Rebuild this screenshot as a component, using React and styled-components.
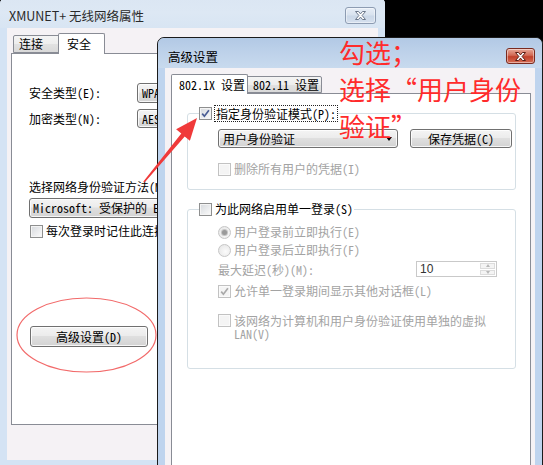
import React from 'react';
import styled, { createGlobalStyle } from 'styled-components';

const UI = `"Noto Sans Mono CJK SC", "Noto Sans CJK SC", "Liberation Sans", sans-serif`;
const TITLE = `"Noto Sans CJK SC", "Liberation Sans", sans-serif`;

const Global = createGlobalStyle`
  html, body { margin: 0; padding: 0; background: #000; }
  body { width: 543px; height: 465px; overflow: hidden; font-family: ${UI}; font-size: 12px; color: #000; }
`;

const Desktop = styled.div`
  position: relative;
  width: 543px;
  height: 465px;
  overflow: hidden;
  background: #000;
`;

const Window = styled.div`
  position: absolute;
  z-index: ${(p) => p.$z};
  left: ${(p) => p.$x}px;
  top: ${(p) => p.$y}px;
  width: ${(p) => p.$w}px;
  height: ${(p) => p.$h}px;
  box-sizing: border-box;
  display: flex;
  flex-direction: column;
  padding: 0 7px 7px;
  border: ${(p) => (p.$active ? '1px solid #1b1b1b' : '0')};
  border-radius: 7px 7px 0 0;
  background: ${(p) => (p.$active ? '#bfd4ee' : '#d4e3f4')};
`;

const TitleBar = styled.div`
  flex: none;
  height: ${(p) => p.$h}px;
  margin: 0 -7px;
  padding: 8px ${(p) => p.$pr}px 0 ${(p) => p.$pl}px;
  box-sizing: border-box;
  display: flex;
  align-items: flex-start;
  justify-content: space-between;
  border-radius: 7px 7px 0 0;
  background: ${(p) =>
    p.$active
      ? 'linear-gradient(#b2c9e5, #bed2ea 50%, #c8daee)'
      : 'linear-gradient(#dbe6f3, #dde8f4 50%, #d8e5f3)'};
`;

const TitleText = styled.div`
  font-family: ${TITLE};
  font-size: 12.5px;
  line-height: 22px;
  color: ${(p) => (p.$active ? '#000' : '#2a2a2a')};
  white-space: nowrap;
`;

const CloseBtn = styled.div`
  margin-top: 2px;
  width: ${(p) => p.$w}px;
  height: ${(p) => p.$h}px;
  box-sizing: border-box;
  border-radius: 3px;
  border: 1px solid ${(p) => (p.$active ? '#7a2b20' : '#8d9cb2')};
  background: ${(p) =>
    p.$active
      ? 'linear-gradient(#e8a898, #d26a55 45%, #c0402a 55%, #d66d55)'
      : 'linear-gradient(#e7eef7, #d9e3ef 45%, #cbd8e8 55%, #d5e0ee)'};
  box-shadow: inset 0 0 0 1px rgba(255, 255, 255, 0.45);
  display: flex;
  align-items: center;
  justify-content: center;
`;

const Client = styled.div`
  flex: 1;
  min-height: 0;
  display: flex;
  flex-direction: column;
  background: #f5f2f5;
  padding: ${(p) => p.$pad};
`;

const TabStrip = styled.div`
  flex: none;
  height: ${(p) => p.$h}px;
  display: flex;
  align-items: flex-end;
  padding-left: 2px;
  margin-bottom: -1px;
  position: relative;
  z-index: 2;
`;

const Tab = styled.div`
  box-sizing: border-box;
  width: ${(p) => p.$w}px;
  height: ${(p) => (p.$selected ? '100%' : `calc(100% - 3px)`)};
  margin: ${(p) => (p.$selected ? '0 -2px' : '0 0 1px 0')};
  padding-left: ${(p) => (p.$selected ? p.$pl + 2 : p.$pl)}px;
  border: 1px solid #898c95;
  border-bottom: ${(p) => (p.$selected ? '0' : '1px solid #898c95')};
  border-radius: 2px 2px 0 0;
  background: ${(p) => (p.$selected ? '#fff' : 'linear-gradient(#f4f4f4, #ededed 50%, #e2e2e2 50%, #d9d9d9)')};
  position: relative;
  z-index: ${(p) => (p.$selected ? 2 : 1)};
  display: flex;
  align-items: center;
  line-height: 14px;
  white-space: nowrap;
`;

const Panel = styled.div`
  box-sizing: border-box;
  flex: ${(p) => (p.$h ? 'none' : '1')};
  height: ${(p) => (p.$h ? `${p.$h}px` : 'auto')};
  border: 1px solid #898c95;
  background: #fff;
  position: relative;
  z-index: 1;
  display: flex;
  flex-direction: column;
  align-items: flex-start;
  padding: ${(p) => p.$pad};
`;

const FieldRow = styled.div`
  display: flex;
  align-items: center;
  height: ${(p) => p.$h}px;
  margin-top: ${(p) => p.$mt || 0}px;
`;

const Label = styled.div`
  flex: none;
  width: ${(p) => (p.$w ? `${p.$w}px` : 'auto')};
  line-height: 14px;
  margin-top: ${(p) => p.$mt || 0}px;
  color: ${(p) => (p.$disabled ? '#a3a3a3' : '#000')};
  white-space: nowrap;
`;

const Combo = styled.div`
  flex: none;
  box-sizing: border-box;
  width: ${(p) => p.$w}px;
  height: ${(p) => p.$h}px;
  margin-top: ${(p) => p.$mt || 0}px;
  border: 1px solid #707070;
  border-radius: 3px;
  background: linear-gradient(#f4f4f4, #ececec 45%, #dfdfdf 50%, #d3d3d3);
  box-shadow: inset 0 0 0 1px rgba(255, 255, 255, 0.8);
  display: flex;
  align-items: center;
  padding: 0 5px 0 ${(p) => p.$pl || 4}px;
  line-height: 14px;
  white-space: nowrap;
  overflow: hidden;
`;

const DropArrow = styled.span`
  flex: none;
  margin-left: auto;
  width: 0;
  height: 0;
  border-left: 3.5px solid transparent;
  border-right: 3.5px solid transparent;
  border-top: 4px solid #000;
`;

const Button = styled.div`
  flex: none;
  box-sizing: border-box;
  width: ${(p) => p.$w}px;
  height: ${(p) => p.$h}px;
  margin-top: ${(p) => p.$mt || 0}px;
  margin-left: ${(p) => p.$ml || 0}px;
  border: 1px solid #707070;
  border-radius: 3px;
  background: linear-gradient(#f4f4f4, #ececec 45%, #dfdfdf 50%, #d3d3d3);
  box-shadow: inset 0 0 0 1px rgba(255, 255, 255, 0.8);
  display: flex;
  align-items: center;
  justify-content: center;
  line-height: 14px;
  white-space: nowrap;
`;

const CheckRow = styled.div`
  display: flex;
  align-items: ${(p) => (p.$top ? 'flex-start' : 'center')};
  gap: 3px;
  margin-top: ${(p) => p.$mt || 0}px;
  margin-left: ${(p) => p.$ml || 0}px;
  line-height: ${(p) => p.$lh || 14}px;
  color: ${(p) => (p.$disabled ? '#a3a3a3' : '#000')};
  white-space: nowrap;
`;

const BoxEl = styled.span`
  flex: none;
  box-sizing: border-box;
  width: 13px;
  height: 13px;
  border: 1px solid ${(p) => (p.$disabled ? '#c2c2c2' : '#8e8f8f')};
  background: ${(p) => (p.$disabled ? '#f4f4f4' : 'linear-gradient(135deg, #d6d9dd, #fbfbfb)')};
  box-shadow: inset 0 0 0 1px ${(p) => (p.$disabled ? '#fafafa' : '#f4f4f4')};
  display: inline-flex;
  align-items: center;
  justify-content: center;
`;

const RadioEl = styled.span`
  flex: none;
  box-sizing: border-box;
  width: 13px;
  height: 13px;
  border-radius: 50%;
  border: 1px solid ${(p) => (p.$disabled ? '#c6c6c6' : '#8e8f8f')};
  background: radial-gradient(circle at 60% 60%, #fbfbfb, #e3e3e3);
  display: inline-flex;
  align-items: center;
  justify-content: center;
`;

const RadioDot = styled.span`
  width: 5px;
  height: 5px;
  border-radius: 50%;
  background: #9a9a9a;
  box-shadow: 0 0 0 1px #c4c4c4;
`;

const Focus = styled.span`
  outline: 1px dotted #222;
  padding: 0 1px;
  line-height: 15px;
`;

const Group = styled.fieldset`
  box-sizing: border-box;
  width: 329px;
  margin: ${(p) => p.$mt}px 0 0 15px;
  padding: 0;
  border: 1px solid #d5dfe5;
  border-radius: 3px;
  min-inline-size: 0;
`;

const Legend = styled.legend`
  margin-left: 11px;
  padding: 0 1px 0 0;
`;

const GroupBody = styled.div`
  display: flex;
  flex-direction: column;
  align-items: flex-start;
  padding: ${(p) => p.$pad};
`;

const Lines = styled.span`
  display: flex;
  flex-direction: column;
`;

const SpinRow = styled.div`
  align-self: stretch;
  display: flex;
  align-items: center;
  justify-content: space-between;
  margin: 4px 14px 0 0;
  height: 16px;
  color: #a3a3a3;
`;

const Spin = styled.div`
  box-sizing: border-box;
  width: 81px;
  height: 16px;
  border: 1px solid #c9c9c9;
  background: #fff;
  display: flex;
  align-items: stretch;
  padding-left: 3px;
  color: #333;
  font-family: "Liberation Sans", sans-serif;
  font-size: 12px;
`;

const SpinValue = styled.span`
  display: flex;
  align-items: center;
`;

const SpinBtns = styled.div`
  margin-left: auto;
  width: 15px;
  display: flex;
  flex-direction: column;
  padding: 1px;
  gap: 1px;
`;

const SpinHalf = styled.div`
  flex: 1;
  border: 1px solid #dcdcdc;
  background: #f4f4f4;
  display: flex;
  align-items: center;
  justify-content: center;
`;

const Tri = styled.span`
  width: 0;
  height: 0;
  border-left: 2.5px solid transparent;
  border-right: 2.5px solid transparent;
  ${(p) => (p.$up ? 'border-bottom: 3px solid #b8b8b8;' : 'border-top: 3px solid #b8b8b8;')}
`;

const Overlay = styled.svg`
  position: absolute;
  left: 0;
  top: 0;
  pointer-events: none;
  z-index: 10;
`;

const Annotation = styled.div`
  position: absolute;
  left: 339px;
  top: 33px;
  z-index: 11;
  font-family: "Noto Sans CJK SC", sans-serif;
  font-size: 26px;
  line-height: 37px;
  color: #ff2b2b;
  white-space: nowrap;
  pointer-events: none;
`;

function XIcon({ active }) {
  return (
    <svg width="13" height="11" viewBox="0 0 13 11">
      <path
        d="M1.5 1.5h3l2 2.4 2-2.4h3l-3.4 4 3.4 4h-3l-2-2.4-2 2.4h-3l3.4-4z"
        fill="#fff"
        stroke={active ? '#5a1d14' : '#6b778a'}
        strokeWidth="1"
        strokeLinejoin="round"
      />
    </svg>
  );
}

function Check({ checked, disabled }) {
  return (
    <BoxEl $disabled={disabled}>
      {checked && (
        <svg width="9" height="9" viewBox="0 0 9 9">
          <path d="M1.2 4.6 L3.4 7.2 L7.9 1.3" fill="none" stroke={disabled ? '#a9a9a9' : '#4a5d94'} strokeWidth="1.7" />
        </svg>
      )}
    </BoxEl>
  );
}

function Radio({ checked, disabled }) {
  return <RadioEl $disabled={disabled}>{checked && <RadioDot />}</RadioEl>;
}

export default function App() {
  return (
    <>
      <Global />
      <Desktop>
        <Window $z={1} $x={0} $y={-3} $w={385} $h={470}>
          <TitleBar $h={31} $pl={9} $pr={9}>
            <TitleText>XMUNET+ 无线网络属性</TitleText>
            <CloseBtn $w={31} $h={17}>
              <XIcon />
            </CloseBtn>
          </TitleBar>
          <Client $pad="5px 4px 0 4px">
            <TabStrip $h={21}>
              <Tab $w={47} $pl={5}>连接</Tab>
              <Tab $w={47} $pl={6} $selected>安全</Tab>
            </TabStrip>
            <Panel $h={372} $pad="29px 0 0 17px">
              <FieldRow $h={20}>
                <Label $w={108}>安全类型(E):</Label>
                <Combo $w={40} $h={20}>WPA2</Combo>
              </FieldRow>
              <FieldRow $h={19} $mt={6}>
                <Label $w={108}>加密类型(N):</Label>
                <Combo $w={40} $h={19}>AES</Combo>
              </FieldRow>
              <Label $mt={52}>选择网络身份验证方法(M):</Label>
              <Combo $w={150} $h={20} $mt={4} $pl={3}>Microsoft: 受保护的 EAP</Combo>
              <CheckRow $mt={6} $ml={1}>
                <Check />
                <span>每次登录时记住此连接的凭据</span>
              </CheckRow>
              <Button $w={118} $h={21} $mt={88} $ml={1}>高级设置(D)</Button>
            </Panel>
          </Client>
        </Window>

        <Window $z={2} $active $x={157} $y={37} $w={386} $h={470}>
          <TitleBar $active $h={30} $pl={10} $pr={7}>
            <TitleText $active>高级设置</TitleText>
            <CloseBtn $active $w={29} $h={16}>
              <XIcon active />
            </CloseBtn>
          </TitleBar>
          <Client $pad="6px 4px 0 6px">
            <TabStrip $h={20}>
              <Tab $w={77} $pl={5} $selected>802.1X 设置</Tab>
              <Tab $w={76} $pl={6}>802.11 设置</Tab>
            </TabStrip>
            <Panel $pad="0">
              <Group $mt={12}>
                <Legend>
                  <CheckRow>
                    <Check checked />
                    <Focus>指定身份验证模式(P):</Focus>
                  </CheckRow>
                </Legend>
                <GroupBody $pad="8px 4px 13px 30px">
                  <FieldRow $h={19}>
                    <Combo $w={180} $h={19}>用户身份验证<DropArrow /></Combo>
                    <Button $w={102} $h={19} $ml={12}>保存凭据(C)</Button>
                  </FieldRow>
                  <CheckRow $mt={14} $disabled>
                    <Check disabled />
                    <span>删除所有用户的凭据(I)</span>
                  </CheckRow>
                </GroupBody>
              </Group>

              <Group $mt={12}>
                <Legend>
                  <CheckRow>
                    <Check />
                    <span>为此网络启用单一登录(S)</span>
                  </CheckRow>
                </Legend>
                <GroupBody $pad="9px 4px 28px 30px">
                  <CheckRow $disabled>
                    <Radio checked disabled />
                    <span>用户登录前立即执行(E)</span>
                  </CheckRow>
                  <CheckRow $mt={4} $disabled>
                    <Radio disabled />
                    <span>用户登录后立即执行(F)</span>
                  </CheckRow>
                  <SpinRow>
                    <span>最大延迟(秒)(M):</span>
                    <Spin>
                      <SpinValue>10</SpinValue>
                      <SpinBtns>
                        <SpinHalf><Tri $up /></SpinHalf>
                        <SpinHalf><Tri /></SpinHalf>
                      </SpinBtns>
                    </Spin>
                  </SpinRow>
                  <CheckRow $mt={7} $disabled>
                    <Check checked disabled />
                    <span>允许单一登录期间显示其他对话框(L)</span>
                  </CheckRow>
                  <CheckRow $mt={16} $disabled $top $lh={13}>
                    <Check disabled />
                    <Lines>
                      <span>该网络为计算机和用户身份验证使用单独的虚拟</span>
                      <span>LAN(V)</span>
                    </Lines>
                  </CheckRow>
                </GroupBody>
              </Group>
            </Panel>
          </Client>
        </Window>

        <Overlay width="543" height="465" viewBox="0 0 543 465">
          <ellipse cx="86.5" cy="335" rx="69.5" ry="37" fill="none" stroke="#f26a6a" strokeWidth="1.2" />
          <polygon
            points="143.4,181.5 181.3,133.6 176.1,129.3 197,118 189.9,140.7 184.7,136.4 144.6,182.5"
            fill="#f03a3a"
          />
        </Overlay>
        <Annotation>
          <div>勾选；</div>
          <div>选择“用户身份</div>
          <div>验证”</div>
        </Annotation>
      </Desktop>
    </>
  );
}
